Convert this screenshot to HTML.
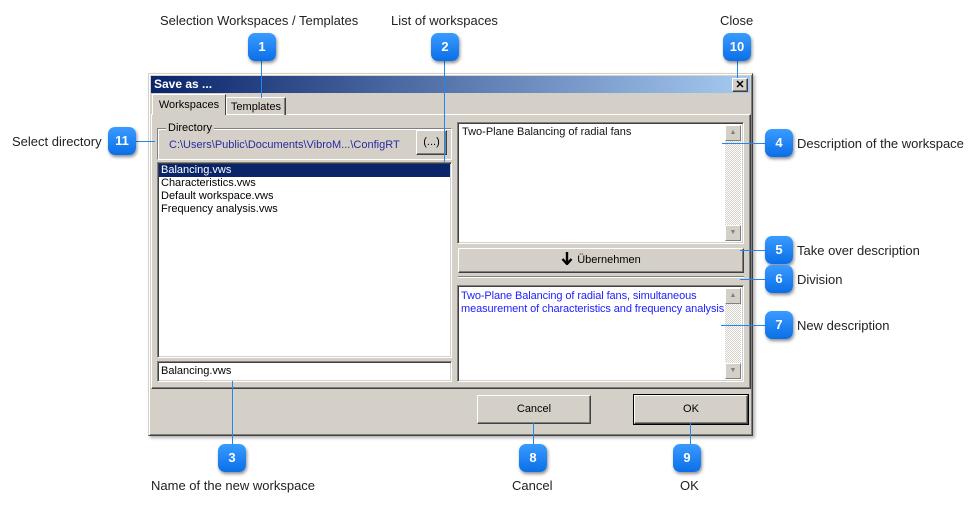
<!DOCTYPE html>
<html><head><meta charset="utf-8"><style>
*{box-sizing:border-box;margin:0;padding:0}
body{width:980px;height:509px;background:#fff;position:relative;overflow:hidden;font-family:"Liberation Sans",sans-serif;font-size:12px;color:#000}
.a{position:absolute}
.lbl{position:absolute;font-size:13px;color:#222;white-space:nowrap}
.b{position:absolute;width:28px;height:28px;border-radius:7px;background:linear-gradient(#3a9bff,#0a6fe8);color:#fff;font-weight:bold;font-size:13px;text-align:center;line-height:28px;box-shadow:1px 2px 3px rgba(0,0,0,.45)}
.ln{position:absolute;background:#1e88f0}
.sunk{border:1px solid;border-color:#808080 #fff #fff #808080;box-shadow:inset 1px 1px 0 #404040,inset -1px -1px 0 #d4d0c8;background:#fff}
.rais{border:1px solid;border-color:#fff #404040 #404040 #fff;box-shadow:inset -1px -1px 0 #808080;background:#d4d0c8;text-align:center}
.t{font-size:11px;line-height:13px;white-space:nowrap}
.sb{position:absolute;right:2px;top:2px;bottom:2px;width:16px;background:repeating-conic-gradient(#d4d0c8 0 25%,#fff 0 50%) 0 0/2px 2px}
.sbb{position:absolute;left:0;width:16px;height:16px;background:#d4d0c8;border:1px solid;border-color:#fff #808080 #808080 #fff;font-size:7px;color:#808080;text-align:center;line-height:14px}
</style></head><body>

<div class="a" style="left:148px;top:73px;width:605px;height:363px;background:#d4d0c8;border:1px solid;border-color:#d4d0c8 #404040 #404040 #d4d0c8;box-shadow:inset 1px 1px 0 #fff,inset -1px -1px 0 #808080,2px 2px 3px rgba(0,0,0,.3)"></div>
<div class="a" style="left:151px;top:76px;width:599px;height:17px;background:linear-gradient(90deg,#0a246a,#a6caf0);color:#fff;font-weight:bold;font-size:12px;line-height:17px;padding-left:3px">Save as ...</div>
<div class="a rais" style="left:732px;top:78px;width:16px;height:14px;font-size:11px;line-height:12px;font-weight:bold">✕</div>

<div class="a" style="left:151px;top:114px;width:600px;height:275px;border:1px solid;border-color:#fff #404040 #404040 #fff;box-shadow:inset -1px -1px 0 #808080"></div>
<div class="a" style="left:152px;top:94px;width:74px;height:21px;background:#d4d0c8;border:1px solid;border-color:#fff #404040 #d4d0c8 #fff;border-bottom:none;font-size:11px;text-align:center;line-height:20px">Workspaces</div>
<div class="a" style="left:226px;top:97px;width:60px;height:18px;border:1px solid;border-color:#fff #404040 #d4d0c8 #fff;border-bottom:none;box-shadow:inset -1px 0 0 #808080;font-size:11px;text-align:center;line-height:19px">Templates</div>

<div class="a" style="left:157px;top:128px;width:295px;height:32px;border:1px solid;border-color:#808080 #fff #fff #808080;box-shadow:inset 1px 1px 0 #fff"></div>
<div class="a t" style="left:166px;top:122px;background:#d4d0c8;padding:0 2px">Directory</div>
<div class="a t" style="left:169px;top:139px;color:#2a2a9c">C:\Users\Public\Documents\VibroM...\ConfigRT</div>
<div class="a rais t" style="left:416px;top:130px;width:31px;height:25px;line-height:23px">(...)</div>

<div class="a sunk" style="left:157px;top:162px;width:295px;height:196px"></div>
<div class="a t" style="left:159px;top:164px;width:291px;height:13px;background:#0a246a;color:#fff;padding-left:2px">Balancing.vws</div>
<div class="a t" style="left:161px;top:177px">Characteristics.vws<br>Default workspace.vws<br>Frequency analysis.vws</div>

<div class="a sunk t" style="left:157px;top:361px;width:295px;height:21px;padding:3px 3px;line-height:13px">Balancing.vws</div>

<div class="a sunk" style="left:457px;top:122px;width:287px;height:122px">
<div class="a t" style="left:4px;top:3px;color:#111">Two-Plane Balancing of radial fans</div>
<div class="sb"><div class="sbb" style="top:0">▲</div><div class="sbb" style="bottom:0">▼</div></div></div>

<div class="a rais t" style="left:458px;top:248px;width:286px;height:25px;line-height:23px"><svg width="12" height="13" viewBox="0 0 12 13" style="vertical-align:-2px;margin-right:4px"><path d="M6 0V11M1.5 7L6 12L10.5 7" stroke="#000" stroke-width="2.4" fill="none"/></svg>Übernehmen</div>
<div class="a" style="left:458px;top:276px;width:286px;height:2px;border-top:1px solid #808080;border-bottom:1px solid #fff"></div>

<div class="a sunk" style="left:457px;top:285px;width:287px;height:97px">
<div class="a t" style="left:3px;top:4px;color:#2020ff;letter-spacing:-0.1px">Two-Plane Balancing of radial fans, simultaneous<br>measurement of characteristics and frequency analysis|</div>
<div class="sb"><div class="sbb" style="top:0">▲</div><div class="sbb" style="bottom:0">▼</div></div></div>

<div class="a rais t" style="left:477px;top:395px;width:114px;height:29px;line-height:27px">Cancel</div>
<div class="a rais t" style="left:634px;top:395px;width:114px;height:29px;line-height:27px;outline:1px solid #000">OK</div>

<div class="ln" style="left:261px;top:60px;width:1px;height:38px"></div>
<div class="ln" style="left:444px;top:60px;width:1px;height:102px"></div>
<div class="ln" style="left:737px;top:60px;width:1px;height:18px"></div>
<div class="ln" style="left:136px;top:141px;width:19px;height:1px"></div>
<div class="ln" style="left:722px;top:143px;width:44px;height:1px"></div>
<div class="ln" style="left:740px;top:250px;width:26px;height:1px"></div>
<div class="ln" style="left:740px;top:279px;width:26px;height:1px"></div>
<div class="ln" style="left:721px;top:325px;width:45px;height:1px"></div>
<div class="ln" style="left:232px;top:381px;width:1px;height:64px"></div>
<div class="ln" style="left:533px;top:423px;width:1px;height:22px"></div>
<div class="ln" style="left:690px;top:423px;width:1px;height:22px"></div>

<div class="b" style="left:248px;top:33px">1</div>
<div class="b" style="left:431px;top:33px">2</div>
<div class="b" style="left:723px;top:33px">10</div>
<div class="b" style="left:108px;top:127px">11</div>
<div class="b" style="left:765px;top:129px">4</div>
<div class="b" style="left:765px;top:236px">5</div>
<div class="b" style="left:765px;top:265px">6</div>
<div class="b" style="left:765px;top:311px">7</div>
<div class="b" style="left:218px;top:444px">3</div>
<div class="b" style="left:519px;top:444px">8</div>
<div class="b" style="left:673px;top:444px">9</div>

<div class="lbl" style="left:160px;top:13px">Selection Workspaces / Templates</div>
<div class="lbl" style="left:391px;top:13px">List of workspaces</div>
<div class="lbl" style="left:720px;top:13px">Close</div>
<div class="lbl" style="left:12px;top:134px">Select directory</div>
<div class="lbl" style="left:797px;top:136px">Description of the workspace</div>
<div class="lbl" style="left:797px;top:243px">Take over description</div>
<div class="lbl" style="left:797px;top:272px">Division</div>
<div class="lbl" style="left:797px;top:318px">New description</div>
<div class="lbl" style="left:151px;top:478px">Name of the new workspace</div>
<div class="lbl" style="left:512px;top:478px">Cancel</div>
<div class="lbl" style="left:680px;top:478px">OK</div>
</body></html>
